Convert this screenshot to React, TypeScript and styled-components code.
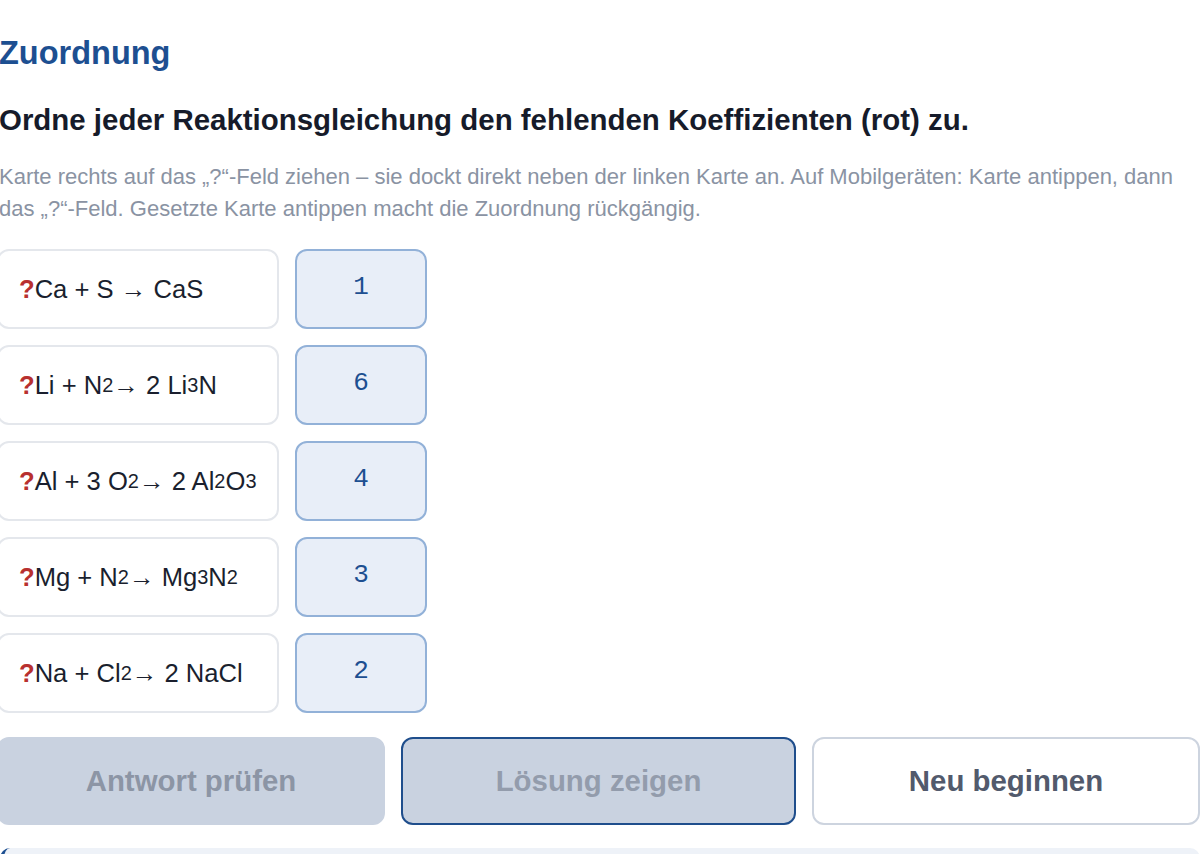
import { FunctionComponent, ReactNode } from "react";
import styled, { createGlobalStyle } from "styled-components";

const GlobalStyle = createGlobalStyle`
  html, body {
    margin: 0;
    padding: 0;
    background: #ffffff;
    overflow: hidden;
  }

  body {
    font-family: "Liberation Sans", Arial, sans-serif;
    color: #1a1f2e;
  }
`;

const Page = styled.main`
  width: 1203px;
  margin-left: -3px;
  padding-top: 34px;
`;

const Title = styled.h2`
  margin: 0 0 0 2px;
  font-size: 32.5px;
  line-height: 38.4px;
  font-weight: 700;
  color: #1d4f91;
`;

const Prompt = styled.h3`
  margin: 28.6px 0 0 2px;
  font-size: 29.45px;
  line-height: 37.7px;
  font-weight: 700;
  color: #161b2a;
`;

const Hint = styled.p`
  margin: 22.7px 0 0 2px;
  font-size: 22px;
  line-height: 32px;
  color: #8a93a3;
`;

const Board = styled.div`
  margin-top: 24px;
  display: flex;
  flex-direction: column;
  gap: 16px;
`;

const Row = styled.div`
  display: flex;
  gap: 16px;
`;

const EquationCard = styled.div`
  box-sizing: border-box;
  width: 282px;
  height: 80px;
  padding: 0 20px;
  display: flex;
  align-items: center;
  background: #ffffff;
  border: 2px solid #e4e7ec;
  border-radius: 12px;
  font-size: 25.6px;
  color: #1a1f2e;
  white-space: nowrap;

  sub {
    font-size: 0.78em;
    vertical-align: -0.04em;
    line-height: 0;
  }
`;

const Missing = styled.span`
  color: #b8302f;
  font-weight: 700;
`;

const CoefficientCard = styled.div`
  box-sizing: border-box;
  width: 132px;
  height: 80px;
  padding-bottom: 4px;
  display: flex;
  align-items: center;
  justify-content: center;
  background: #e8eef8;
  border: 2px solid #92b1d8;
  border-radius: 12px;
  font-family: "Liberation Mono", "DejaVu Sans Mono", monospace;
  font-size: 26px;
  color: #1d4f91;
`;

const Actions = styled.div`
  margin-top: 24px;
  display: grid;
  grid-template-columns: 388px 395px 388px;
  gap: 16px;
`;

const ActionButton = styled.button<{ variant: "primary" | "outline" | "ghost" }>`
  box-sizing: border-box;
  height: 88px;
  border-radius: 12px;
  font-family: "Liberation Sans", Arial, sans-serif;
  font-size: 29.4px;
  font-weight: 700;
  cursor: pointer;
  background: ${(p) => (p.variant === "ghost" ? "#ffffff" : "#c9d2e0")};
  color: ${(p) =>
    p.variant === "ghost"
      ? "#525a6c"
      : p.variant === "outline"
      ? "#939cac"
      : "#8c95a5"};
  border: 2px solid
    ${(p) =>
      p.variant === "ghost"
        ? "#cdd4df"
        : p.variant === "outline"
        ? "#1f4e8c"
        : "#c9d2e0"};
`;

const Feedback = styled.div`
  margin-top: 23px;
  height: 60px;
  margin-left: 3px;
  background: #eef2f8;
  border-left: 4px solid #1d4f91;
  border-radius: 10px 10px 0 0;
`;

interface Pair {
  equation: ReactNode;
  coefficient: number;
}

const pairs: Pair[] = [
  { equation: <>Ca + S → CaS</>, coefficient: 1 },
  {
    equation: (
      <>
        Li + N<sub>2</sub>→ 2 Li<sub>3</sub>N
      </>
    ),
    coefficient: 6,
  },
  {
    equation: (
      <>
        Al + 3 O<sub>2</sub>→ 2 Al<sub>2</sub>O<sub>3</sub>
      </>
    ),
    coefficient: 4,
  },
  {
    equation: (
      <>
        Mg + N<sub>2</sub>→ Mg<sub>3</sub>N<sub>2</sub>
      </>
    ),
    coefficient: 3,
  },
  {
    equation: (
      <>
        Na + Cl<sub>2</sub>→ 2 NaCl
      </>
    ),
    coefficient: 2,
  },
];

const App: FunctionComponent = () => {
  return (
    <>
      <GlobalStyle />
      <Page>
        <Title>Zuordnung</Title>
        <Prompt>
          Ordne jeder Reaktionsgleichung den fehlenden Koeffizienten (rot) zu.
        </Prompt>
        <Hint>
          Karte rechts auf das „?“-Feld ziehen – sie dockt direkt neben der
          linken Karte an. Auf Mobilgeräten: Karte antippen, dann das
          „?“-Feld. Gesetzte Karte antippen macht die Zuordnung rückgängig.
        </Hint>

        <Board>
          {pairs.map((pair, i) => (
            <Row key={i}>
              <EquationCard>
                <Missing>?</Missing>
                {pair.equation}
              </EquationCard>
              <CoefficientCard>{pair.coefficient}</CoefficientCard>
            </Row>
          ))}
        </Board>

        <Actions>
          <ActionButton variant="primary">Antwort prüfen</ActionButton>
          <ActionButton variant="outline">Lösung zeigen</ActionButton>
          <ActionButton variant="ghost">Neu beginnen</ActionButton>
        </Actions>

        <Feedback />
      </Page>
    </>
  );
};

export default App;
